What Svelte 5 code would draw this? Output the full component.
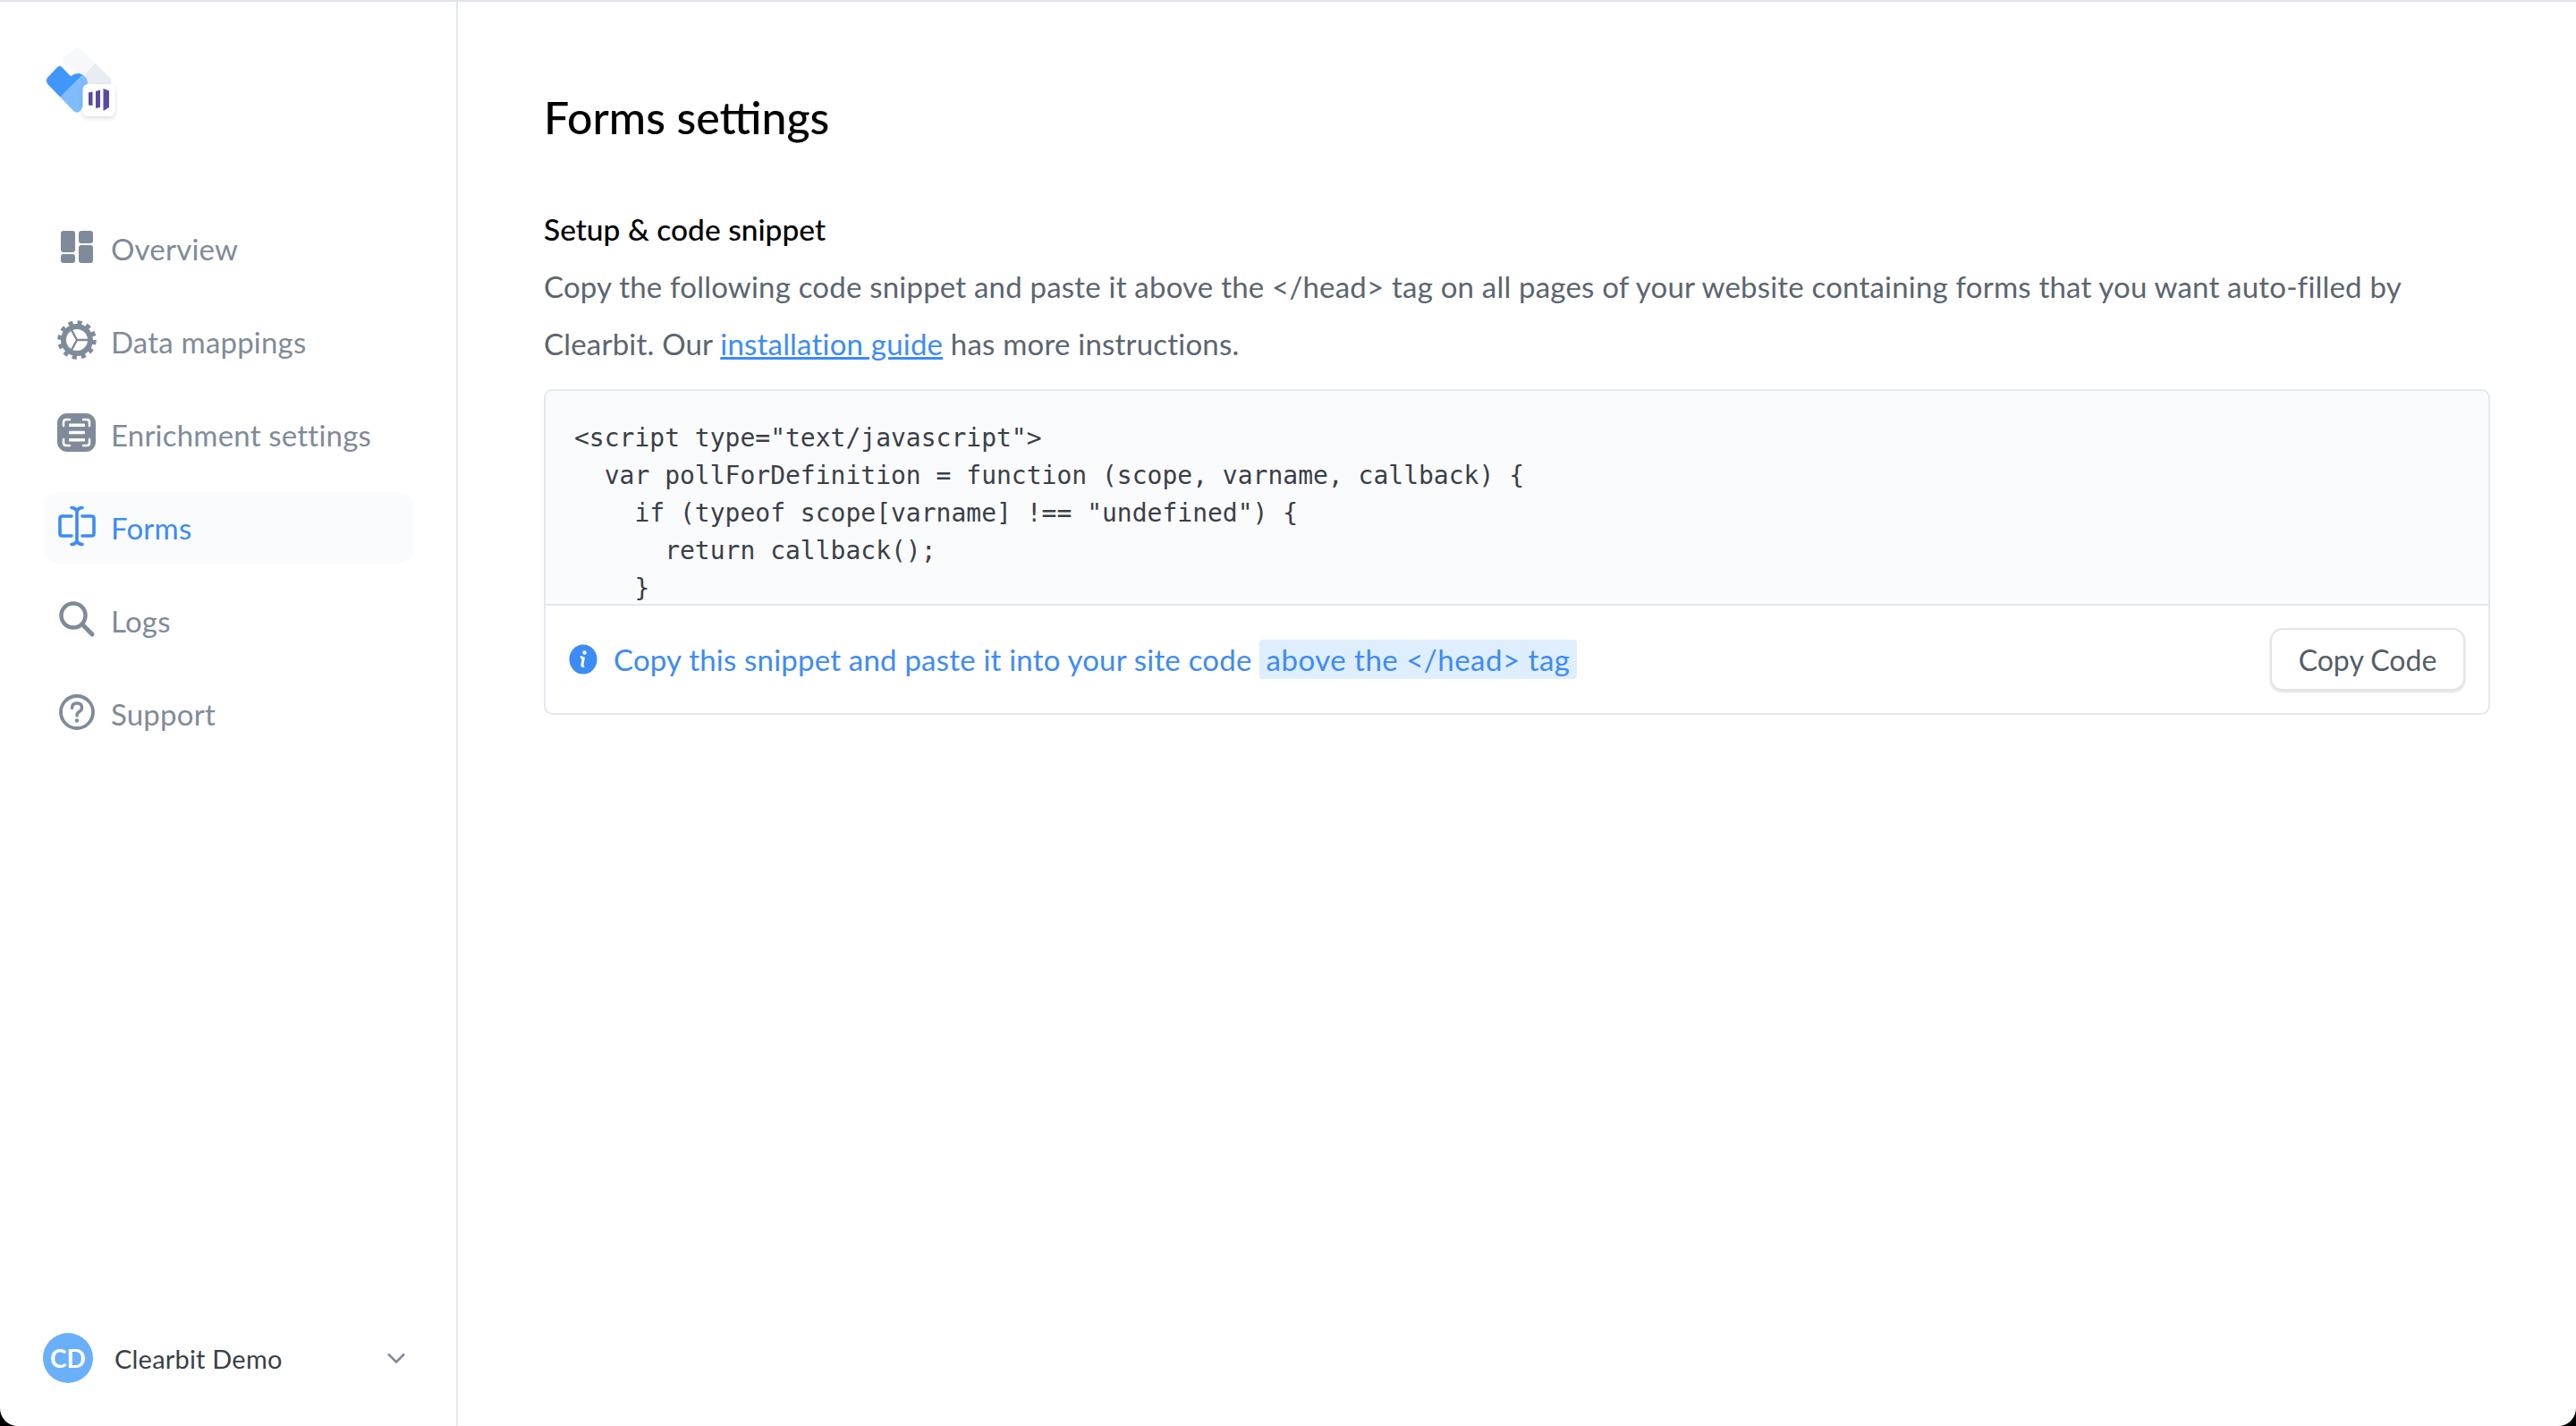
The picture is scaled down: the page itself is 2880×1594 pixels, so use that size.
<script>
	const navItems = [
		{ label: "Overview", icon: "overview" },
		{ label: "Data mappings", icon: "gear" },
		{ label: "Enrichment settings", icon: "enrich" },
		{ label: "Forms", icon: "forms", active: true },
		{ label: "Logs", icon: "logs" },
		{ label: "Support", icon: "support" },
	];

	const code = `<script type="text/javascript">
  var pollForDefinition = function (scope, varname, callback) {
    if (typeof scope[varname] !== "undefined") {
      return callback();
    }`.replace("<script", "<" + "script");
</script>

<div class="app">
	<aside class="sidebar">
		<div class="logo">
			<svg width="100" height="100" viewBox="40 40 100 100">
				<defs>
					<linearGradient id="blue" gradientUnits="userSpaceOnUse" x1="61" y1="75" x2="101" y2="115">
						<stop offset="0.5" stop-color="#4096fa" />
						<stop offset="0.5" stop-color="#7fbcfd" />
					</linearGradient>
					<linearGradient id="grey" gradientUnits="userSpaceOnUse" x1="88" y1="60" x2="118" y2="90">
						<stop offset="0.5" stop-color="#f6f8fa" />
						<stop offset="0.5" stop-color="#e9edf1" />
					</linearGradient>
					<filter id="soft" x="-40%" y="-40%" width="180%" height="180%">
						<feDropShadow dx="0" dy="2" stdDeviation="2.5" flood-color="#27364b" flood-opacity="0.16" />
					</filter>
				</defs>
				<path d="M72 64 84 54.500Q87 52.500 90 54.500L123 87Q125.500 90 124 94L105 110 88 84Q80 78 72 72 68 68 72 64Z" fill="url(#grey)" />
				<path d="M53 86.500 64.500 74.500Q67 72.500 69 74.500L79 85Q88 78 96 86 100 92 97 98V112L90 124Q86 128 82 124L53 94Q50 90 53 86.500Z" fill="url(#blue)" stroke="#fff" stroke-width="0.5" />
				<rect x="92.500" y="94" width="36" height="36" rx="6" fill="#fff" filter="url(#soft)" />
				<path d="M99 103.500 103.500 102.500V118L99 117.500Z M107 102 112 100.500V120L107 121Z M115.500 99 122 101.500V120L115.500 124Z" fill="#5a4a9f" />
			</svg>
		</div>

		<nav class="nav">
			{#each navItems as item}
				<div class="nav-item" class:active={item.active}>
					<span class="nav-icon">
						<svg width="48" height="48" viewBox="0 0 48 48">
							{#if item.icon === "overview"}
								<g fill="currentColor">
									<rect x="6" y="6" width="16" height="24" rx="3" />
									<rect x="6" y="32" width="16" height="10" rx="3" />
									<rect x="26" y="6" width="16" height="14" rx="3" />
									<rect x="26" y="22" width="16" height="20" rx="3" />
								</g>
							{:else if item.icon === "gear"}
								<g fill="none" stroke="currentColor">
									<circle cx="24" cy="24" r="15" stroke-width="6" />
									<circle cx="24" cy="24" r="19.500" stroke-width="4.500" stroke-dasharray="5.100 5.110" />
									<path d="M24 24H38M24 24 17 11M24 24 17 37" stroke-width="2.500" />
								</g>
							{:else if item.icon === "enrich"}
								<rect x="2" y="2" width="43" height="43" rx="11" fill="currentColor" />
								<g fill="none" stroke="#fff" stroke-width="2.500" stroke-linecap="round">
									<path d="M9 16V12Q9 9 12 9H16M31 9H35Q38 9 38 12V16M38 31V35Q38 38 35 38H31M16 38H12Q9 38 9 35V31" />
								</g>
								<g fill="#fff">
									<rect x="15" y="13.500" width="18" height="3.500" rx="1" />
									<rect x="15" y="21.700" width="18" height="3.500" rx="1" />
									<rect x="15" y="30" width="18" height="3.500" rx="1" />
								</g>
							{:else if item.icon === "forms"}
								<g fill="none" stroke="currentColor" stroke-width="3.600" stroke-linecap="round">
									<path d="M18 13H7.500Q5 13 5 15.500V32.500Q5 35 7.500 35H18" />
									<path d="M30 13H40.500Q43 13 43 15.500V32.500Q43 35 40.500 35H30" />
									<path d="M24 7V41M18 3.500Q22 3.500 24 7 26 3.500 30 3.500M18 44.500Q22 44.500 24 41 26 44.500 30 44.500" />
								</g>
							{:else if item.icon === "logs"}
								<g fill="none" stroke="currentColor" stroke-linecap="round">
									<circle cx="20" cy="20" r="13.500" stroke-width="4.500" />
									<path d="M31 31 41 41" stroke-width="5" />
								</g>
							{:else}
								<g fill="none" stroke="currentColor" stroke-linecap="round">
									<circle cx="24" cy="24" r="18" stroke-width="3.800" />
									<path d="M18.500 19.500Q18.500 14 24 14 29.500 14 29.500 19 29.500 22 26.500 23.500 24 25 24 28" stroke-width="3.500" />
									<circle cx="24" cy="33.500" r="2.200" fill="currentColor" stroke="none" />
								</g>
							{/if}
						</svg>
					</span>
					<span>{item.label}</span>
				</div>
			{/each}
		</nav>

		<div class="account">
			<span class="avatar">CD</span>
			<span class="account-name">Clearbit Demo</span>
			<svg class="chevron" width="22" height="14" viewBox="0 0 22 14">
				<path d="M2 2.500 11 11.500 20 2.500" fill="none" stroke="#7f8b9a" stroke-width="2.500" />
			</svg>
		</div>
	</aside>

	<main class="content">
		<h1>Forms settings</h1>
		<h2>Setup &amp; code snippet</h2>
		<p class="intro">
			Copy the following code snippet and paste it above the &lt;/head&gt; tag on all pages of your website containing forms that you want auto-filled by Clearbit. Our <a href="#guide">installation guide</a> has more instructions.
		</p>

		<section class="snippet">
			<pre>{code}</pre>
			<div class="snippet-foot">
				<svg class="info" width="32" height="34" viewBox="0 0 32 34">
					<ellipse cx="16" cy="17" rx="15.500" ry="16.500" fill="#3d8bf5" />
					<path d="M15.500 14.500 13 15M16.500 14.500 14.800 23.500Q14.600 25 17 24" fill="none" stroke="#fff" stroke-width="3" />
					<circle cx="17.500" cy="9.500" r="2.200" fill="#fff" />
				</svg>
				<span class="foot-text">Copy this snippet and paste it into your site code</span>
				<span class="foot-mark">above the &lt;/head&gt; tag</span>
				<button class="copy">Copy Code</button>
			</div>
		</section>
	</main>

	<span class="corner left"></span>
	<span class="corner right"></span>
</div>

<style>
	:global(body) {
		margin: 0;
		background: #fff;
	}

	.app {
		position: relative;
		display: flex;
		box-sizing: border-box;
		height: 1594px;
		border-top: 2px solid #dfe3ea;
		overflow: hidden;
		font-family: Lato, "Liberation Sans", sans-serif;
		font-size: 33px;
		letter-spacing: 0.2px;
	}

	.sidebar {
		display: flex;
		flex-direction: column;
		box-sizing: border-box;
		flex: none;
		width: 512px;
		border-right: 2px solid #e3e8f0;
	}

	.logo {
		height: 100px;
		padding: 38px 0 0 40px;
	}

	.nav {
		display: flex;
		flex-direction: column;
		gap: 24px;
		margin: 98px 48px 0 48px;
	}

	.nav-item {
		display: flex;
		align-items: center;
		gap: 14px;
		height: 80px;
		padding-left: 14px;
		border-radius: 16px;
		color: #7f8b9a;
	}

	.nav-item.active {
		background: #fafbfd;
		color: #3d8bf5;
	}

	.nav-icon {
		display: flex;
		width: 48px;
		height: 48px;
		margin-bottom: 4px;
	}

	.account {
		display: flex;
		align-items: center;
		margin-top: auto;
		padding: 0 56px 48px 48px;
		font-size: 29px;
		color: #3a3f47;
	}

	.avatar {
		display: flex;
		align-items: center;
		justify-content: center;
		width: 56px;
		height: 56px;
		margin-right: 24px;
		border-radius: 50%;
		background: #69aff9;
		color: #fff;
		font-weight: 700;
		font-size: 28px;
		letter-spacing: 0;
	}

	.account-name {
		flex: 1;
	}

	.content {
		flex: 1;
		padding: 0 96px 0 96px;
		min-width: 0;
	}

	h1 {
		margin: 99px 0 0;
		font-size: 50px;
		line-height: 60px;
		font-weight: 500;
		letter-spacing: 0;
		color: #000;
	}

	h2 {
		margin: 75px 0 0;
		font-size: 33.500px;
		line-height: 40px;
		font-weight: 500;
		letter-spacing: 0;
		color: #000;
	}

	.intro {
		margin: 12px 0 0;
		line-height: 64px;
		color: #5b6570;
	}

	.intro a {
		color: #3d8bf5;
	}

	.snippet {
		margin-top: 19px;
		border: 2px solid #e3e8f0;
		border-radius: 10px;
	}

	pre {
		box-sizing: border-box;
		height: 240px;
		margin: 0;
		padding: 32px 32px 0;
		overflow: hidden;
		background: #fafbfd;
		border-bottom: 2px solid #e3e8f0;
		border-radius: 8px 8px 0 0;
		font-family: "DejaVu Sans Mono", monospace;
		font-size: 28px;
		line-height: 42px;
		letter-spacing: 0;
		color: #3a3f47;
	}

	.snippet-foot {
		display: flex;
		align-items: center;
		height: 120px;
		padding: 0 26px;
		color: #3d8bf5;
	}

	.info {
		flex: none;
		margin-right: 18px;
	}

	.foot-mark {
		margin-left: 8px;
		padding: 0 8px;
		line-height: 44px;
		border-radius: 4px;
		background: #deeefc;
		letter-spacing: 0.5px;
	}

	.copy {
		margin-left: auto;
		width: 218px;
		height: 70px;
		border: 2px solid #e2e4e8;
		border-radius: 14px;
		background: #fff;
		box-shadow: 0 2px 3px rgba(30, 40, 60, 0.14);
		font: inherit;
		font-size: 32px;
		letter-spacing: 0;
		color: #555e68;
	}

	.corner {
		position: absolute;
		bottom: 0;
		width: 20px;
		height: 20px;
		background: #000;
	}

	.corner.left {
		left: 0;
		clip-path: path("M0 0A20 20 0 0 0 20 20H0Z");
	}

	.corner.right {
		right: 0;
		clip-path: path("M20 0A20 20 0 0 1 0 20H20Z");
	}
</style>
